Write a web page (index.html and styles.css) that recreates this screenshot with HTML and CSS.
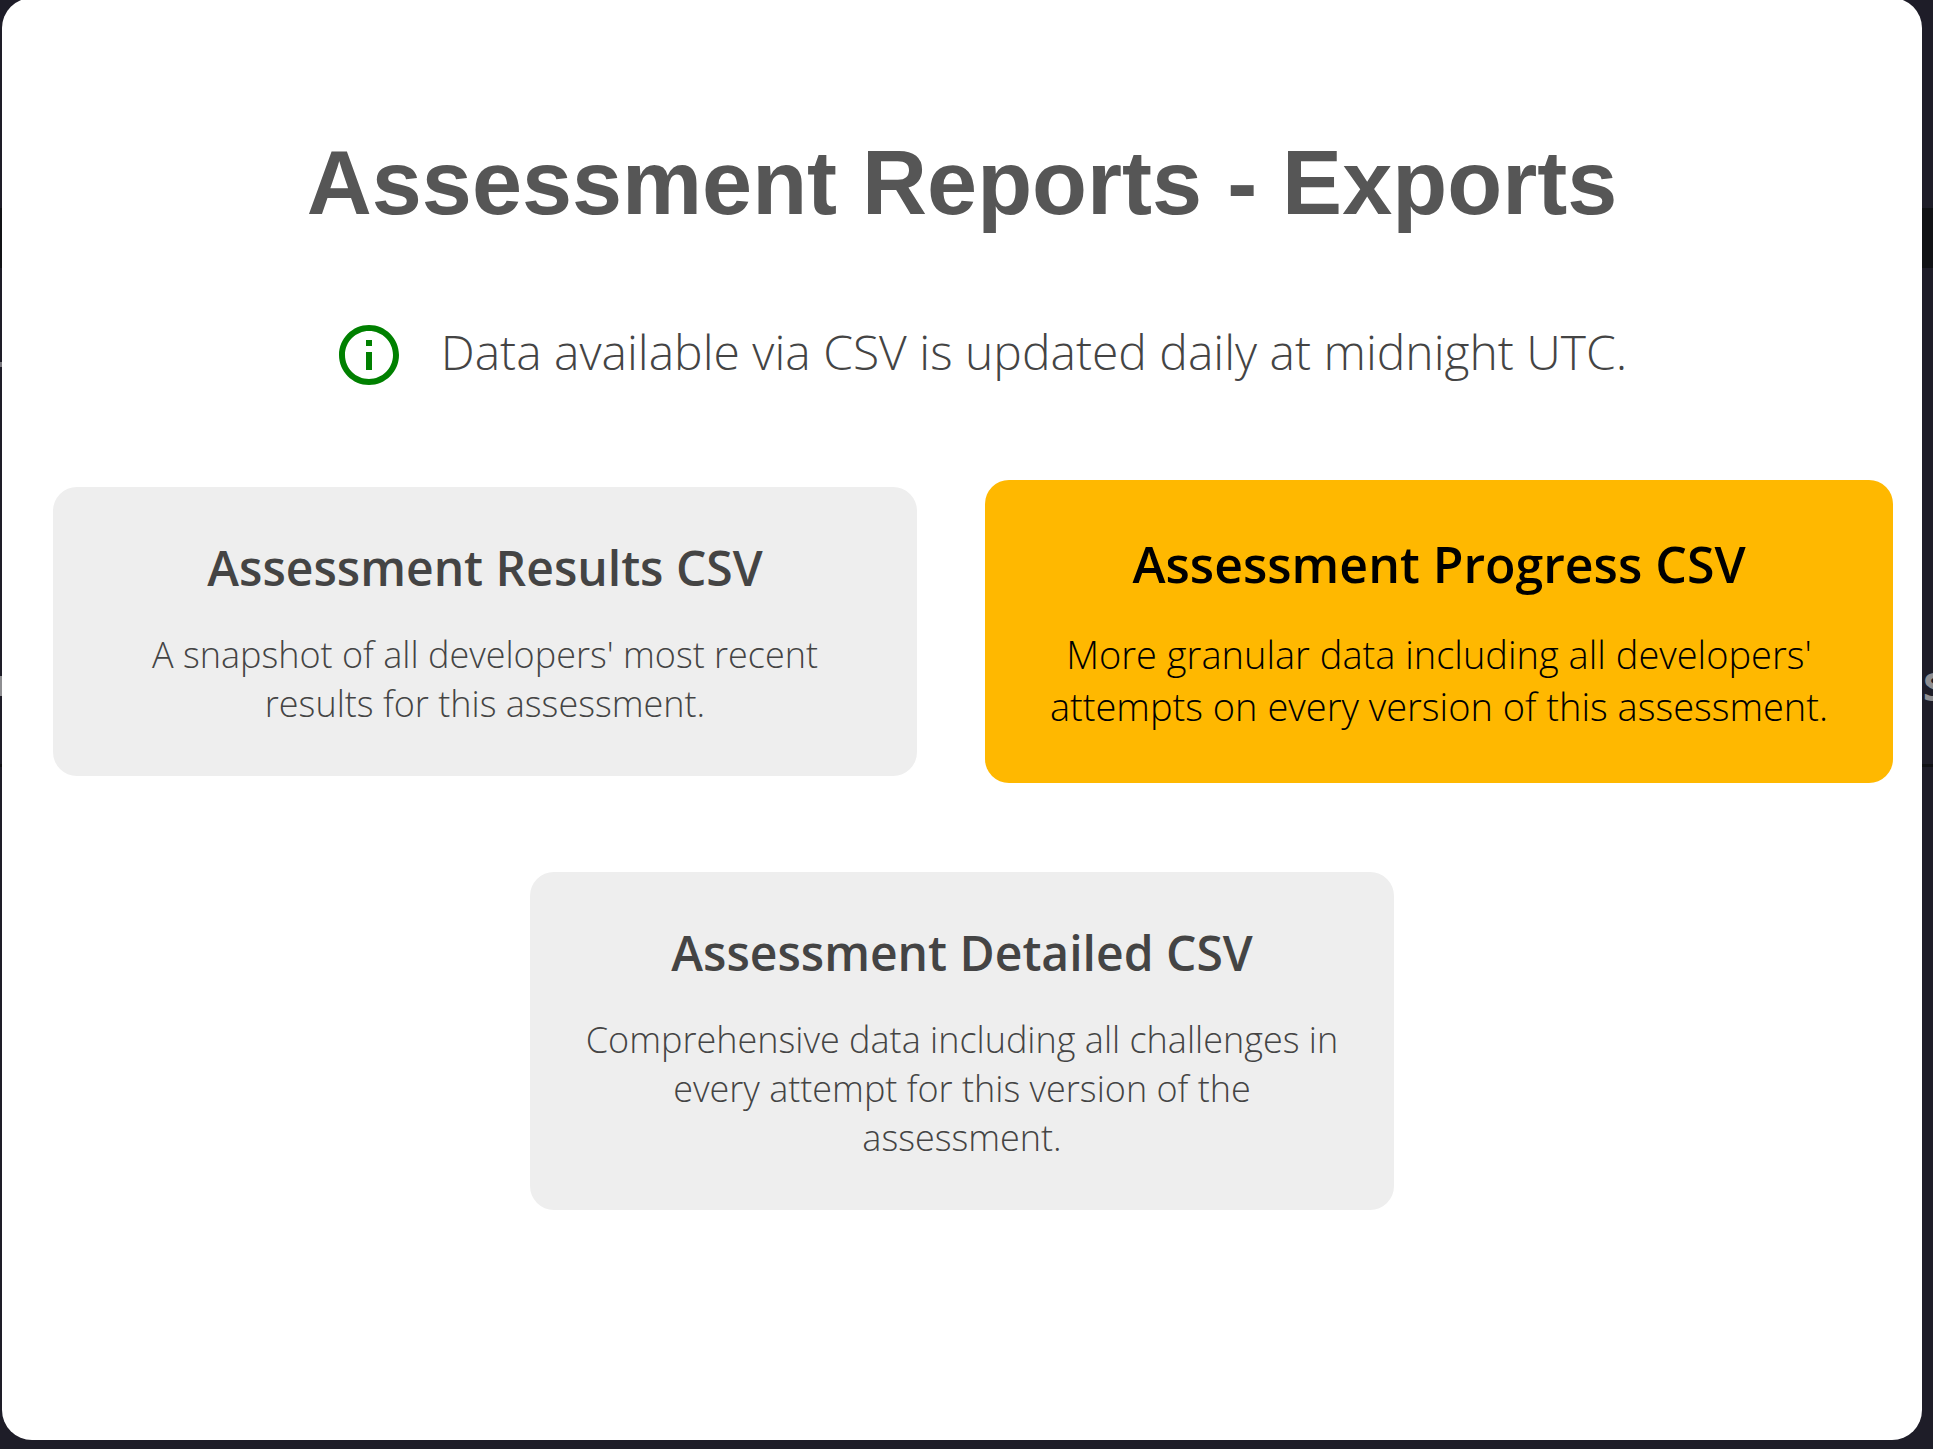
FILE: index.html
```
<!DOCTYPE html>
<html lang="en">
<head>
    <meta charset="UTF-8">
    <meta name="viewport" content="width=device-width, initial-scale=1.0">
    <title>Assessment Reports - Exports</title>
    <link rel="stylesheet" href="styles.css">
</head>
<body>
    <!-- dimmed page behind the modal -->
    <div class="backdrop" aria-hidden="true">
        <div class="backdrop-bar"></div>
        <div class="backdrop-note"></div>
        <div class="backdrop-row">
            <span class="backdrop-mark"></span>
            <span class="backdrop-heading">S</span>
        </div>
    </div>

    <main class="modal">
        <h1>Assessment Reports - Exports</h1>

        <div class="info">
            <svg class="info-icon" viewBox="0 0 24 24" aria-hidden="true">
                <path d="M11 7h2v2h-2zm0 4h2v6h-2zm1-9C6.48 2 2 6.48 2 12s4.48 10 10 10 10-4.48 10-10S17.52 2 12 2zm0 18c-4.41 0-8-3.59-8-8s3.59-8 8-8 8 3.59 8 8-3.59 8-8 8z"/>
            </svg>
            <p>Data available via CSV is updated daily at midnight UTC.</p>
        </div>

        <div class="cards">
            <button type="button" class="card">
                <span class="card-title">Assessment Results CSV</span>
                <span class="card-text">A snapshot of all developers' most recent results for this assessment.</span>
            </button>
            <button type="button" class="card active">
                <span class="card-title">Assessment Progress CSV</span>
                <span class="card-text">More granular data including all developers' attempts on every version of this assessment.</span>
            </button>
            <button type="button" class="card">
                <span class="card-title">Assessment Detailed CSV</span>
                <span class="card-text">Comprehensive data including all challenges in every attempt for this version of the assessment.</span>
            </button>
        </div>
    </main>
</body>
</html>
```
FILE: styles.css
```
* {
    box-sizing: border-box;
}
body {
    margin: 0;
    display: grid;
    min-height: 100vh;
    overflow: hidden;
    background-color: #1e1d28;
    font-family: "Open Sans", sans-serif;
    font-weight: 300;
    color: #444;
}
.backdrop,
.modal {
    grid-area: 1 / 1;
}
.backdrop {
    padding-top: 208px;
}
.backdrop-bar {
    height: 60px;
    background-color: #111215;
}
.backdrop-note {
    width: 2px;
    height: 5px;
    margin-top: 94px;
    background-color: #77767c;
}
.backdrop-row {
    display: flex;
    justify-content: space-between;
    align-items: center;
    height: 160px;
    margin-top: 240px;
    border-bottom: 3px solid #111215;
}
.backdrop-mark {
    width: 2px;
    height: 20px;
    background-color: #8e8e91;
}
.backdrop-heading {
    width: 10px;
    overflow: hidden;
    font-size: 40px;
    font-weight: 700;
    color: #8e8e91;
}
.modal {
    margin: -2px 11px 9px 2px;
    padding-top: 125px;
    border-radius: 30px;
    background-color: #fff;
    text-align: center;
}
h1 {
    margin: 0;
    font-family: "Liberation Sans", Arial, sans-serif;
    font-size: 90px;
    line-height: 120px;
    color: #565656;
}
.info {
    display: flex;
    justify-content: center;
    align-items: flex-start;
    gap: 36px;
    margin-top: 76px;
    padding-left: 36px;
}
.info p {
    margin: 0;
    font-size: 48px;
}
.info-icon {
    width: 72px;
    height: 72px;
    fill: #008000;
}
.cards {
    display: flex;
    flex-wrap: wrap;
    justify-content: center;
    gap: 96px 90px;
    margin-top: 96px;
}
.card {
    display: flex;
    flex-direction: column;
    gap: 30px;
    width: 45%;
    padding: 48px;
    border: none;
    border-radius: 24px;
    background-color: #eee;
    color: #444;
    font: inherit;
    text-align: center;
    cursor: pointer;
}
.card-title {
    align-self: center;
    font-size: 48px;
    font-weight: 600;
}
.card-text {
    align-self: center;
    font-size: 36px;
}
.card.active,
.card:hover {
    background-color: #ffb800;
    color: #000;
}
/* the active card grows out of its slot on every side */
.card.active {
    width: calc(45% + 44px);
    margin: -7px -22px;
    padding: 50px;
}
.active .card-title {
    font-size: 50px;
}
.active .card-text {
    font-size: 38px;
}
```
